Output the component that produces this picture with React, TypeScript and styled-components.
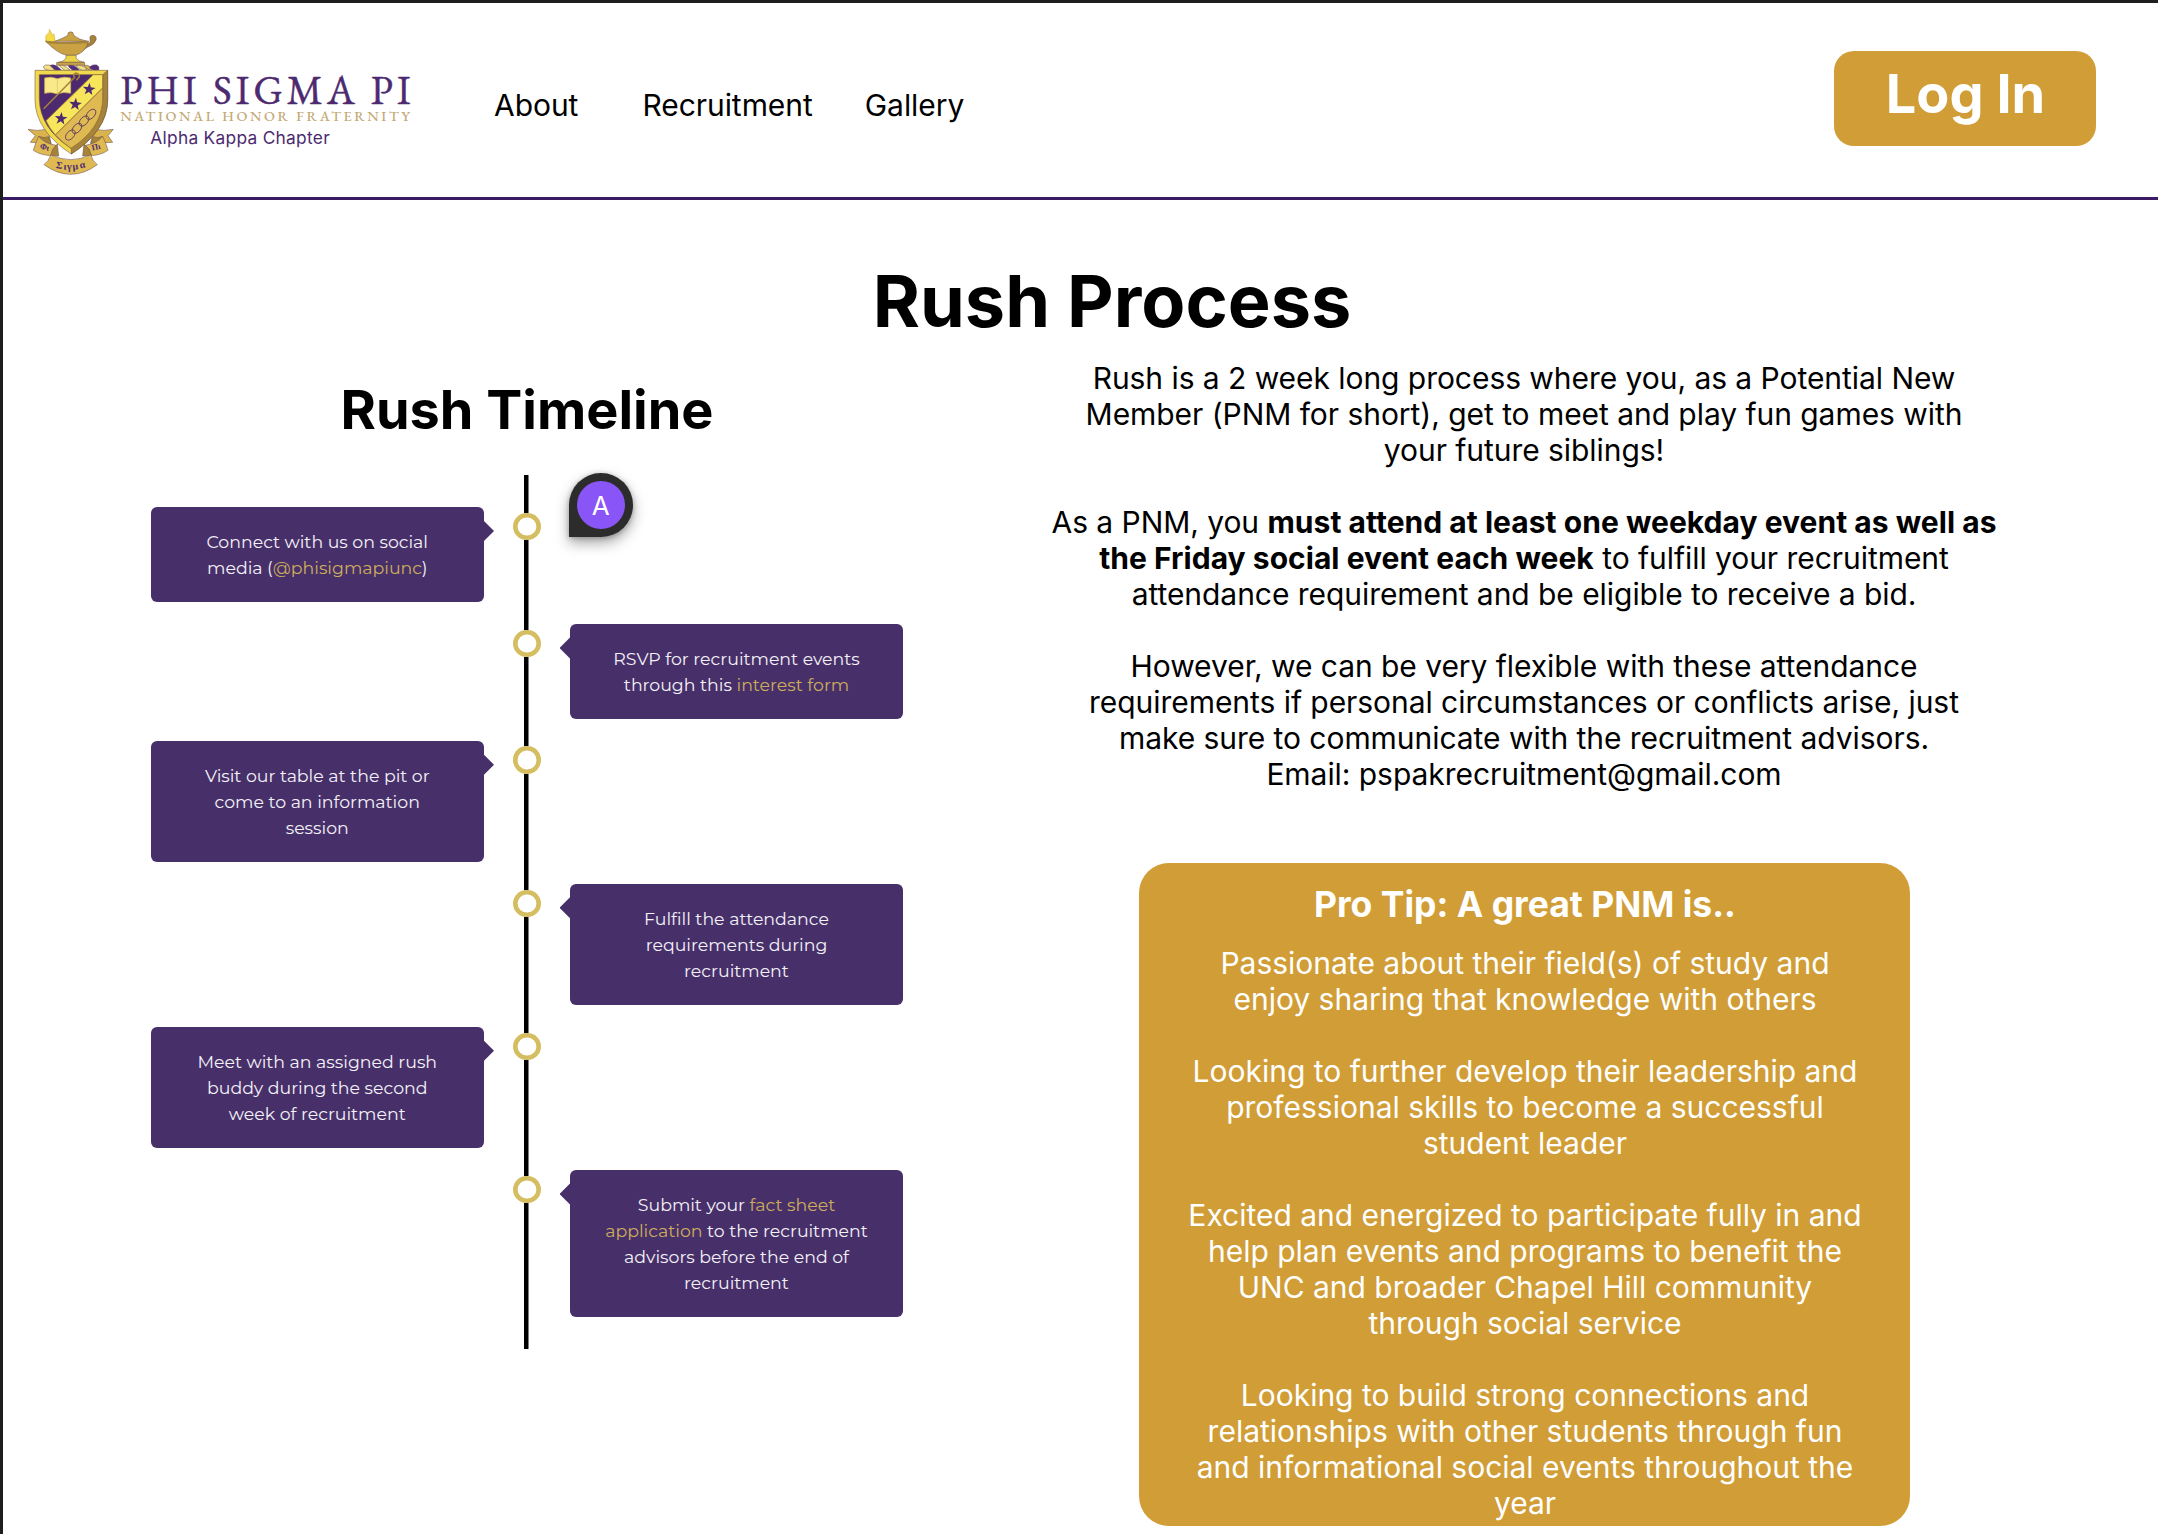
import React from 'react';
import styled, { createGlobalStyle, css } from 'styled-components';

const GlobalStyle = createGlobalStyle`
  * { box-sizing: border-box; }
  html, body { margin: 0; padding: 0; background: #fff; }
  body { font-family: Inter, 'Liberation Sans', sans-serif; color: #000; }
  h1, h2, h3, p { margin: 0; }
`;

const Page = styled.div`
  width: 2158px;
  height: 1534px;
  overflow: hidden;
  border-top: 3px solid #1e1e1e;
  border-left: 3px solid #1e1e1e;
  background: #fff;
`;

const Header = styled.header`
  display: flex;
  align-items: flex-start;
  height: 197px;
  border-bottom: 3px solid #3b1c64;
  padding: 26px 62px 0 25px;
`;

const Brand = styled.a`
  display: flex;
  width: 390px;
`;

const Nav = styled.nav`
  display: flex;
  flex: 1;
  padding: 58px 0 0 76px;
`;

const NavLink = styled.a<{ $gap: number }>`
  font-size: 30px;
  line-height: 36px;
  letter-spacing: -0.05px;
  margin-right: ${(p) => p.$gap}px;
`;

const LoginButton = styled.button`
  margin-top: 22px;
  width: 262px;
  height: 95px;
  padding: 0 0 10px 1px;
  border: 0;
  border-radius: 20px;
  background: #d19d36;
  color: #fff;
  font: 700 54px/65px Inter, sans-serif;
`;

const PageTitle = styled.h1`
  padding: 57px 0 0 63px;
  text-align: center;
  font-size: 72px;
  line-height: 87px;
  font-weight: 700;
`;

const Columns = styled.main`
  display: grid;
  grid-template-columns: 752px 960px;
  column-gap: 141px;
  padding-left: 148px;
`;

const TimelineTitle = styled.h2`
  padding-top: 33px;
  text-align: center;
  font-size: 54px;
  line-height: 65px;
`;

const Timeline = styled.div`
  display: flex;
  flex-direction: column;
  gap: 22.1px;
  height: 874px;
  margin-top: 32.5px;
  padding-top: 32.9px;
  background: linear-gradient(#000, #000) 373px 0 / 4.5px 100% no-repeat;
`;

const Step = styled.div`
  display: grid;
  grid-template-columns: 332.5px 27px 333px;
  justify-content: space-between;
  position: relative;
`;

const Dot = styled.i`
  grid-column: 2;
  grid-row: 1;
  width: 27.4px;
  height: 27.4px;
  margin-top: 5.3px;
  border-radius: 50%;
  background: #fff;
  box-shadow: inset 0 0 0 4.6px #d5bd61;
`;

const Card = styled.div<{ $side: 'left' | 'right' }>`
  grid-column: ${(p) => (p.$side === 'left' ? 1 : 3)};
  grid-row: 1;
  position: relative;
  padding: 21.4px 0 21.1px;
  border-radius: 6px;
  background: #47306a;
  color: #f4f1f7;
  text-align: center;
  white-space: pre-line;
  font: 400 17.35px/26.15px Montserrat, Lato, sans-serif;
  &::after {
    content: '';
    position: absolute;
    top: 12.6px;
    ${(p) => (p.$side === 'left' ? css`right: -10.5px;` : css`left: -10.5px;`)}
    width: 11px;
    height: 22px;
    background: #47306a;
    clip-path: ${(p) =>
      p.$side === 'left' ? 'polygon(0 0, 100% 50%, 0 100%)' : 'polygon(100% 0, 0 50%, 100% 100%)'};
  }
`;

const CardLink = styled.a`
  color: #cdac5c;
`;

const CommentPin = styled.div`
  position: absolute;
  left: 417.7px;
  top: -34px;
  display: grid;
  place-items: center;
  width: 64px;
  height: 64px;
  border-radius: 50% 50% 50% 0;
  background: #2c2c2c;
  box-shadow: 0 6px 14px rgba(0, 0, 0, 0.35), 0 1px 5px rgba(0, 0, 0, 0.25);
`;

const PinAvatar = styled.span`
  display: grid;
  place-items: center;
  width: 48px;
  height: 48px;
  border-radius: 50%;
  background: #8a55f7;
  color: #fff;
  font-size: 26px;
`;

const Details = styled.section`
  padding-top: 16px;
  text-align: center;
`;

const Stack = styled.div`
  display: flex;
  flex-direction: column;
  gap: 36px;
`;

const Copy = styled.p`
  font-size: 30px;
  line-height: 36px;
  letter-spacing: -0.05px;
  white-space: pre-line;
`;

const Strong = styled.strong`
  font-weight: 700;
  letter-spacing: 0.03px;
`;

const TipPanel = styled.aside`
  width: 771px;
  height: 663px;
  margin: 71px auto 0;
  padding: 20px 0 0 2px;
  border-radius: 30px;
  background: #d19d36;
  color: #fff;
`;

const TipTitle = styled.h3`
  font-size: 35.5px;
  line-height: 43px;
  margin-bottom: 19px;
`;

const TipCopy = styled(Copy)`
  letter-spacing: -0.01px;
`;

const OUTLINE = '#6a4a4a';

function Star({ x, y }: { x: number; y: number }) {
  const pts = Array.from({ length: 10 }, (_, i) => {
    const r = i % 2 ? 8 : 20;
    const a = -Math.PI / 2 + 0.1 + (i * Math.PI) / 5;
    return `${(x + r * Math.cos(a)).toFixed(1)},${(y + r * Math.sin(a)).toFixed(1)}`;
  }).join(' ');
  return <polygon points={pts} fill="#4d2a70" />;
}

function Logo() {
  return (
    <svg width="390" height="150" viewBox="84 87 1170 450">
      <g stroke={OUTLINE} strokeWidth="1.6" strokeLinejoin="round">
        <path d="M139 126 Q134 106 143 101 Q147 106 148 88 Q156 98 156 107 L161 101 Q165 112 165 126Z" fill="#f5dc45" stroke="#c9a243" />
        <path d="M262 131 Q273 131 270 117 Q268 106 279 106 Q291 108 288 120 Q284 133 262 142 L235 158Z" fill="#a58438" />
        <path d="M164 124 Q196 112 203 106 L205 98 Q212 93 219 98 L221 106 Q234 118 262 124Z" fill="#c9a243" />
        <path d="M136 123 Q170 132 266 123 Q255 162 222 166 L200 166 Q172 160 136 123Z" fill="#c9a243" />
        <path d="M136 123 Q200 130 266 123 L264 130 Q200 134 142 130Z" fill="#a58438" stroke="none" />
        <path d="M198 166 H229 L228 174 Q234 184 252 187 L175 187 Q193 184 198 174Z" fill="#ecd346" />
        <path d="M170 187 H254 V196 H170Z" fill="#c9a243" />
        <path d="M130 201 Q134 192 150 196 L166 211 Q134 214 130 201Z" fill="#f3e282" />
        <path d="M150 196 Q166 190 184 210 L170 212 Q160 208 150 196Z" fill="#542d80" />
        <path d="M178 197 Q190 192 210 210 L196 212 Q186 206 178 197Z" fill="#f3e282" />
        <path d="M204 197 Q224 192 238 210 L220 212 Q210 206 204 197Z" fill="#542d80" />
        <path d="M228 197 Q244 192 262 208 L250 212 Q236 208 228 197Z" fill="#f3e282" />
        <path d="M252 197 Q264 192 278 206 L272 211 Q258 208 252 197Z" fill="#d8b64b" />
        <path d="M268 202 Q276 192 290 195 Q300 200 296 210 Q276 214 268 202Z" fill="#542d80" />
        <path d="M84 388 Q112 395 145 387 L152 428 Q125 430 91 427 L106 407Z" fill="#d9b34c" />
        <path d="M340 388 Q312 395 281 387 L272 428 Q300 430 338 427 L324 407Z" fill="#d9b34c" />
        <path d="M116 409 Q132 416 146 410 L154 432 L116 424Z" fill="#a58438" />
        <path d="M308 409 Q292 416 280 410 L272 432 L308 424Z" fill="#a58438" />
        <path d="M116 409 Q106 430 100 451 Q124 467 158 467 Q163 446 168 436 Q132 430 116 409Z" fill="#dfba53" />
        <path d="M308 409 Q318 430 324 451 Q300 467 268 467 Q262 446 256 436 Q292 430 308 409Z" fill="#dfba53" />
        <path d="M158 448 L172 432 L176 468 L152 466Z" fill="#a58438" />
        <path d="M268 448 L252 432 L248 468 L274 466Z" fill="#a58438" />
        <path d="M105 211 H323 V300 Q322 392 214 462 Q106 392 105 300Z" fill="#f0da4b" />
        <path d="M323 211 V300 Q322 392 214 462 V444 Q307 380 308 300 V224Z" fill="#a58438" />
        <path d="M118 224 H308 V296 Q307 384 213 445 Q119 384 118 296Z" fill="#4d2a70" />
        <path d="M280 224 H308 V264 L166 405 Q148 384 138 362Z" fill="#f7e65c" stroke="#a58438" strokeWidth="3" />
        <path d="M308 264 V296 Q307 384 213 445 Q188 428 166 405Z" fill="#dfba53" stroke="#a58438" strokeWidth="3" />
        <path d="M134 234 Q154 228 172 236 Q192 228 212 234 V280 Q190 274 172 282 Q154 274 134 280Z" fill="#f8ea8b" stroke="#d8b64b" strokeWidth="2" />
        <path d="M172 236 V282" stroke="#d8b64b" />
        <path d="M131 326 L224 232 Q216 224 228 219 Q240 222 238 230 L229 241" fill="none" stroke="#a58438" strokeWidth="4.5" />
      </g>
      <Star x={267} y={268} />
      <Star x={226} y={313} />
      <Star x={183} y={356} />
      <g fill="none" stroke="#5f3a5c" strokeWidth="2.6">
        <ellipse cx="273" cy="343" rx="18" ry="11" transform="rotate(-48 273 343)" />
        <ellipse cx="252" cy="363" rx="18" ry="11" transform="rotate(-48 252 363)" />
        <ellipse cx="231" cy="385" rx="18" ry="11" transform="rotate(-48 231 385)" />
        <ellipse cx="211" cy="405" rx="18" ry="11" transform="rotate(-48 211 405)" />
      </g>
      <path d="M153 464 Q212 494 272 464 Q278 484 292 494 Q212 552 132 494 Q146 484 153 464Z" fill="#dfba53" stroke={OUTLINE} strokeWidth="1.6" />
      <g fill="#4d2a70" fontFamily="'Liberation Serif', serif" fontWeight="700" fontSize="30" textAnchor="middle">
        <text transform="translate(132 449) rotate(14)" fontSize="25">Φι</text>
        <text transform="translate(290 449) rotate(-12)" fontSize="25">Πι</text>
        <text transform="translate(176 506) rotate(10)">Σ</text>
        <text transform="translate(194 509) rotate(6)">ι</text>
        <text transform="translate(208 509)">γ</text>
        <text transform="translate(227 508) rotate(-6)">μ</text>
        <text transform="translate(249 504) rotate(-12)">α</text>
      </g>
      <g fontFamily="'EB Garamond', 'Liberation Serif', serif">
        <text x="361" y="311" fontSize="120" fontWeight="400" fill="#4d2a70" stroke="#4d2a70" strokeWidth="1.5" textLength="871">PHI SIGMA PI</text>
        <text x="361" y="363" fontSize="43" fontWeight="500" fill="#c5ab79" textLength="869">NATIONAL HONOR FRATERNITY</text>
      </g>
      <text x="451" y="433" fontFamily="Inter, sans-serif" fontSize="52" fill="#4d2a70" textLength="538">
        Alpha Kappa Chapter
      </text>
    </svg>
  );
}

const steps: { side: 'left' | 'right'; body: React.ReactNode }[] = [
  { side: 'left', body: <>Connect with us on social{'\n'}media (<CardLink>@phisigmapiunc</CardLink>)</> },
  { side: 'right', body: <>RSVP for recruitment events{'\n'}through this <CardLink>interest form</CardLink></> },
  { side: 'left', body: <>Visit our table at the pit or{'\n'}come to an information{'\n'}session</> },
  { side: 'right', body: <>Fulfill the attendance{'\n'}requirements during{'\n'}recruitment</> },
  { side: 'left', body: <>Meet with an assigned rush{'\n'}buddy during the second{'\n'}week of recruitment</> },
  {
    side: 'right',
    body: (
      <>
        Submit your <CardLink>fact sheet</CardLink>{'\n'}<CardLink>application</CardLink> to the recruitment{'\n'}advisors before the end of{'\n'}recruitment
      </>
    ),
  },
];

const tips = [
  'Passionate about their field(s) of study and\nenjoy sharing that knowledge with others',
  'Looking to further develop their leadership and\nprofessional skills to become a successful\nstudent leader',
  'Excited and energized to participate fully in and\nhelp plan events and programs to benefit the\nUNC and broader Chapel Hill community\nthrough social service',
  'Looking to build strong connections and\nrelationships with other students through fun\nand informational social events throughout the\nyear',
];

export default function App() {
  return (
    <>
      <GlobalStyle />
      <Page>
        <Header>
          <Brand><Logo /></Brand>
          <Nav>
            <NavLink $gap={64}>About</NavLink>
            <NavLink $gap={52}>Recruitment</NavLink>
            <NavLink $gap={0}>Gallery</NavLink>
          </Nav>
          <LoginButton>Log In</LoginButton>
        </Header>
        <PageTitle>Rush Process</PageTitle>
        <Columns>
          <section>
            <TimelineTitle>Rush Timeline</TimelineTitle>
            <Timeline>
              {steps.map((s, i) => (
                <Step key={i}>
                  <Card $side={s.side}>{s.body}</Card>
                  <Dot />
                  {i === 0 && <CommentPin><PinAvatar>A</PinAvatar></CommentPin>}
                </Step>
              ))}
            </Timeline>
          </section>
          <Details>
            <Stack>
              <Copy>
                {'Rush is a 2 week long process where you, as a Potential New\nMember (PNM for short), get to meet and play fun games with\nyour future siblings!'}
              </Copy>
              <Copy>
                {'As a PNM, you '}
                <Strong>must attend at least one weekday event as well as</Strong>
                {'\n'}
                <Strong>the Friday social event each week</Strong>
                {' to fulfill your recruitment\nattendance requirement and be eligible to receive a bid.'}
              </Copy>
              <Copy>
                {'However, we can be very flexible with these attendance\nrequirements if personal circumstances or conflicts arise, just\nmake sure to communicate with the recruitment advisors.\nEmail: pspakrecruitment@gmail.com'}
              </Copy>
            </Stack>
            <TipPanel>
              <TipTitle>Pro Tip: A great PNM is..</TipTitle>
              <Stack>
                {tips.map((t) => <TipCopy key={t}>{t}</TipCopy>)}
              </Stack>
            </TipPanel>
          </Details>
        </Columns>
      </Page>
    </>
  );
}
